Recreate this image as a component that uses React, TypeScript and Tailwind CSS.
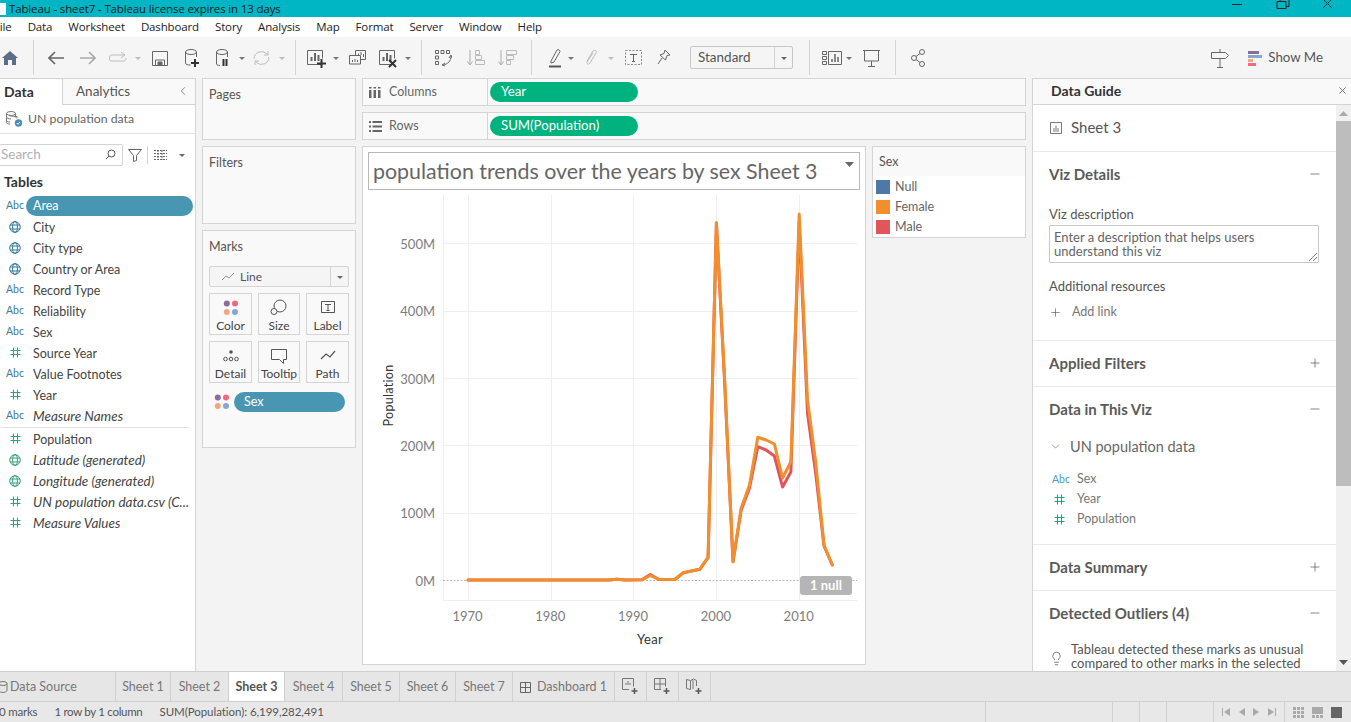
import React from "react";
import { Plus, Minus, ChevronDown, ChevronLeft, X, Lightbulb } from "lucide-react";

const Ico = ({ w, className, children }: { w: number; className?: string; children?: React.ReactNode }) => (
  <svg width={w} height={24} viewBox={`0 0 ${w} 24`} fill="none" stroke="#666" strokeWidth={1} className={`shrink-0 ${className ?? ""}`}>
    {children}
  </svg>
);

const Caret = ({ className, color = "#777" }: { className?: string; color?: string }) => (
  <svg width={6} height={24} viewBox="0 0 6 24" className={`shrink-0 ${className ?? ""}`}>
    <path d="M0 11h6l-3 3z" fill={color} />
  </svg>
);

const Sep = ({ className }: { className?: string }) => <div className={`h-[35px] w-px shrink-0 bg-[#d4d4d4] ${className ?? ""}`} />;

const Hash = ({ color = "#2aa583" }: { color?: string }) => (
  <svg width={11} height={11} viewBox="0 0 11 11" fill="none" stroke={color} strokeWidth={1} className="block">
    <path d="M3.5 0.5v10M7.5 0.5v10M0.5 3.5h10M0.5 7.500h10" />
  </svg>
);

const GlobeIcon = ({ color }: { color: string }) => (
  <svg width={12} height={12} viewBox="0 0 12 12" fill="none" stroke={color} strokeWidth={1} className="block">
    <circle cx="6" cy="6" r="5.300" />
    <ellipse cx="6" cy="6" rx="2.400" ry="5.300" />
    <path d="M1 4h10M1 8h10" />
  </svg>
);

const Abc = ({ color = "#3f7a9a" }: { color?: string }) => <span className="text-[10.5px] leading-none" style={{ color }}>Abc</span>;

type Kind = "abc" | "globe" | "hash" | "ggen" | "hgen";

const FieldIcon = ({ kind }: { kind: Kind }) => {
  if (kind === "abc") return <Abc />;
  if (kind === "globe") return <GlobeIcon color="#2f7899" />;
  if (kind === "ggen") return <GlobeIcon color="#35a27a" />;
  return <Hash />;
};

const Field = ({ kind, name, italic, pill }: { kind: Kind; name: string; italic?: boolean; pill?: boolean }) => (
  <div className="flex h-[21px] items-center">
    <div className="flex w-[29px] shrink-0 justify-center pl-px">
      <FieldIcon kind={kind} />
    </div>
    {pill ? (
      <div className="-ml-[3px] flex h-[20px] w-[167px] items-center rounded-full bg-[#4996b2] pl-[7px] pt-[1px] text-white">{name}</div>
    ) : (
      <div className={`ml-[4px] truncate whitespace-nowrap text-[#444] ${italic ? "pt-[1px] text-[13.5px] italic" : "pt-[3px]"}`}>{name}</div>
    )}
  </div>
);

const Card = ({ label, className }: { label: string; className: string }) => (
  <div className={`border border-[#d4d4d4] bg-[#f9f9f9] pl-[6px] pt-[7px] text-[#555] ${className}`}>{label}</div>
);

const MarkBtn = ({ label, children }: { label: string; children: React.ReactNode }) => (
  <div className="flex h-[42px] flex-col items-center border border-[#d4d4d4] bg-[#f9f9f9] pt-[4px] text-[12px] leading-none text-[#444]">
    <svg width={20} height={20} viewBox="0 0 20 20" fill="none" stroke="#555" strokeWidth={1}>{children}</svg>
    <span className="mt-[2px] whitespace-nowrap">{label}</span>
  </div>
);

const Dots = () => (
  <>
    <circle cx="5.8" cy="5.5" r="3" fill="#8a6d9b" stroke="none" />
    <circle cx="14" cy="5.5" r="3" fill="#f2697f" stroke="none" />
    <circle cx="5.8" cy="14" r="3" fill="#f2a77f" stroke="none" />
    <circle cx="14" cy="14" r="3" fill="#85a6d2" stroke="none" />
  </>
);

const Shelf = ({ label, pill, icon, className }: { label: string; pill: string; icon: React.ReactNode; className?: string }) => (
  <div className={`flex h-[28px] items-center border border-[#d4d4d4] bg-[#f9f9f9] ${className ?? ""}`}>
    <div className="flex h-full w-[125px] shrink-0 items-center border-r border-[#d4d4d4] pl-[6px] text-[#666]">
      <span className="w-[20px]">{icon}</span>
      <span>{label}</span>
    </div>
    <div className="ml-[2px] flex h-[20px] w-[148px] items-center rounded-full bg-[#00b27d] pb-[1px] pl-[11px] text-[13.2px] text-white">{pill}</div>
  </div>
);

const years = (y: number) => 467 + (y - 1970) * 8.28;
const orange: [number, number][] = [[1970, 580], [1987, 580], [1988, 579.3], [1989, 580], [1991, 579.8], [1992, 575.5], [1993, 579.2], [1995, 579.5], [1996, 572.7], [1998, 569.3], [1999, 557.3], [2000, 223], [2001, 380], [2002, 561.7], [2003, 508], [2004, 485], [2005, 437.3], [2006, 440], [2007, 444], [2008, 478], [2009, 461.7], [2010, 214], [2011, 400], [2012, 463], [2013, 545], [2014, 565]];
const red: [number, number][] = [[1970, 580], [1987, 580], [1988, 579.3], [1989, 580], [1991, 579.8], [1992, 574.5], [1993, 579.2], [1995, 579.5], [1996, 572.7], [1998, 569.3], [1999, 557.3], [2000, 223], [2001, 384], [2002, 561.7], [2003, 510], [2004, 488], [2005, 446.7], [2006, 450], [2007, 456], [2008, 487], [2009, 471.7], [2010, 222], [2011, 413], [2012, 474], [2013, 546], [2014, 565]];
const toPts = (d: [number, number][]) => d.map(([y, v]) => `${years(y).toFixed(1)},${v}`).join(" ");

const Chart = () => (
  <svg width={502} height={474} viewBox="362 190 502 474" className="block" style={{ fontFamily: "Lato, sans-serif" }}>
    <g stroke="#efefef" strokeWidth={1}>
      <path d="M442.5 195V601M442 600.5H856" />
      {[243.5, 311.5, 378.5, 445.5, 513.5].map((y) => <path key={y} d={`M442 ${y}H856`} />)}
      {[467.5, 550.5, 632.5, 715.5, 798.5].map((x) => <path key={x} d={`M${x} 195V601`} />)}
    </g>
    <path d="M442 580.5H856" stroke="#bbb" strokeWidth={1} strokeDasharray="2 1.5" />
    <g fontSize={13} fill="#7d7d7d" textAnchor="end">
      {[["500M", 249], ["400M", 316], ["300M", 384], ["200M", 451], ["100M", 518], ["0M", 586]].map(([t, y]) => (
        <text key={t} x={434} y={y as number}>{t}</text>
      ))}
    </g>
    <g fontSize={13} fill="#7d7d7d" textAnchor="middle">
      {[1970, 1980, 1990, 2000, 2010].map((y) => <text key={y} x={years(y) - 0.5} y={621}>{y}</text>)}
    </g>
    <text x={649} y={644} fontSize={13} fill="#333" textAnchor="middle" letterSpacing={0.3}>Year</text>
    <text transform="translate(392 395.5) rotate(-90)" fontSize={12.5} fill="#333" textAnchor="middle" letterSpacing={0.3}>Population</text>
    <polyline points={toPts(red)} fill="none" stroke="#e0535f" strokeWidth={3} strokeLinejoin="round" strokeLinecap="round" />
    <polyline points={toPts(orange)} fill="none" stroke="#f28e2b" strokeWidth={3} strokeLinejoin="round" strokeLinecap="round" />
    <rect x={799} y={576} width={52} height={19} rx={3} fill="#b5b5b5" />
    <text x={825} y={590} fontSize={13} fontWeight={700} fill="#fff" textAnchor="middle">1 null</text>
  </svg>
);

const Legend = ({ c, t }: { c: string; t: string }) => (
  <div className="flex h-[20px] items-center pl-[3px]">
    <div className="h-[14px] w-[14px]" style={{ background: c }} />
    <span className="ml-[5px] text-[#666]">{t}</span>
  </div>
);

const Head = ({ title, open }: { title: string; open?: boolean }) => (
  <div className="flex h-[45px] items-center justify-between pb-[1px] pl-[16px] pr-[14px] text-[15px] font-bold text-[#5a5a5a]">
    <span>{title}</span>
    {open ? <Minus size={14} color="#444" strokeWidth={1.1} /> : <Plus size={14} color="#444" strokeWidth={1.1} />}
  </div>
);

const Tab = ({ t, w, active }: { t: string; w: string; active?: boolean }) => (
  <div className={`flex h-full shrink-0 items-center justify-center border-r border-[#d0d0d0] pt-[1px] ${w} ${active ? "bg-white font-bold text-[#555]" : "text-[#777]"}`}>{t}</div>
);

const TabAdd = ({ children }: { children: React.ReactNode }) => (
  <div className="flex h-full w-[32px] shrink-0 items-center justify-center border-r border-[#d0d0d0]">
    <svg width={17} height={17} viewBox="0 0 17 17" fill="none" stroke="#777">
      {children}
      <path d="M12.5 10v6M9.5 13h6" stroke="#555" strokeWidth={1.5} />
    </svg>
  </div>
);

export default function App() {
  const ui = "Lato, sans-serif";
  return (
    <div className="flex h-[722px] w-[1351px] flex-col overflow-hidden bg-[#f3f3f3] text-[12.5px]" style={{ fontFamily: ui }}>
      {/* Title bar */}
      <div className="flex h-[17px] shrink-0 items-center bg-[#00b5c4] text-[11.5px] tracking-[-0.14px] text-[#1a1a1a]" style={{ fontFamily: "'Open Sans', sans-serif" }}>
        <div className="h-[12px] w-[6px] bg-white" />
        <span className="ml-[3px] whitespace-nowrap">Tableau - sheet7 - Tableau license expires in 13 days</span>
        <svg width={100} height={17} viewBox="0 0 100 17" className="ml-auto mr-[19px]" fill="none" stroke="#222">
          <path d="M0 4.5h10" />
          <path d="M45 1.5h9v7h-9zM48 1.5v-2h9v7h-3" />
          <path d="M91 -1l9 9M100 -1l-9 9" />
        </svg>
      </div>
      {/* Menu */}
      <div className="flex h-[20px] shrink-0 items-center gap-[16px] bg-white text-[11.5px] tracking-[-0.14px] text-[#222]" style={{ fontFamily: "'Open Sans', sans-serif" }}>
        <span className="-ml-[6px]">File</span>
        {["Data", "Worksheet", "Dashboard", "Story", "Analysis", "Map", "Format", "Server", "Window", "Help"].map((m) => <span key={m}>{m}</span>)}
      </div>
      {/* Toolbar */}
      <div className="flex h-[41px] shrink-0 items-center bg-[#f5f5f5]">
        <Ico w={18} className="ml-[1px]"><path d="M1 12 9 5l8 7h-2v7h-4v-5H7v5H3v-7z" fill="#5a6f85" stroke="none" /></Ico>
        <Sep className="ml-[14px]" />
        <Ico w={16} className="ml-[14px]" ><path d="M16 12H1M7 6l-6 6 6 6" strokeWidth={1.6} /></Ico>
        <Ico w={16} className="ml-[16px]"><path d="M0 12h15M9 6l6 6-6 6" stroke="#aaa" strokeWidth={1.6} /></Ico>
        <Ico w={19} className="ml-[12px]"><path d="M18 12c0 2-1 3-2 3H3c-2 0-2-6 0-6h13M13 6l4 3-4 3" stroke="#bbb" /></Ico>
        <Caret className="ml-[8px]" color="#bbb" />
        <Ico w={16} className="ml-[11px]"><path d="M.5 5.5h15v14H.5zM3.5 19v-5h9v5" /><path d="M6 16h4v3H6z" fill="#666" /></Ico>
        <Ico w={15} className="ml-[17px]"><ellipse cx="6" cy="6" rx="5.5" ry="2.5" /><path d="M.5 6v11c0 1.500 2 2 5 2M11.500 6v5" /><path d="M10 13v8M6 17h8" stroke="#333" strokeWidth={2} /></Ico>
        <Ico w={12} className="ml-[16px]"><ellipse cx="6" cy="6" rx="5.500" ry="2.500" /><path d="M.5 6v12c0 1 2 1.500 3.500 1.500M11.500 6v5" /><path d="M7.500 13v7M10.500 13v7" stroke="#333" strokeWidth={2} /></Ico>
        <Caret className="ml-[11px]" />
        <Ico w={17} className="ml-[8px]"><path d="M1 13a7.500 7.500 0 0 1 13-5M16 11a7.500 7.500 0 0 1-13 5" stroke="#bbb" /><path d="M11 9h4V5M6 15H2v4" stroke="#bbb" /></Ico>
        <Caret className="ml-[9px]" color="#bbb" />
        <Sep className="ml-[10px]" />
        <Ico w={19} className="ml-[11px]"><path d="M15.500 18.500H.5v-14h15v8" /><path d="M4.500 15v-4M8 15V7M11.500 15V9" strokeWidth={2} /><path d="M14.500 13v9M10 17.500h9" stroke="#333" strokeWidth={2} /></Ico>
        <Caret className="ml-[7px]" />
        <Ico w={17} className="ml-[10px]"><path d="M6.500 9V4.500h10v9H11.500M.5 9.500h11v8.500H.5z" /><path d="M3.500 16v-2M6 16v-3M8.500 16v-2M9.500 9V7.500M12 9V6M14.500 11V8" /></Ico>
        <Ico w={18} className="ml-[13px]"><path d="M15.500 18.500H.5v-14h15v8" /><path d="M4.500 15v-4M8 15V7M11.500 15V9" strokeWidth={2} /><path d="M10 14l7 7M17 14l-7 7" stroke="#333" strokeWidth={2} /></Ico>
        <Caret className="ml-[8px]" />
        <Sep className="ml-[10px]" />
        <Ico w={17} className="ml-[13px]"><path d="M.5 4.500h3v3h-3zM6 4.500h3v3H6zM11.500 4.500h3v3h-3zM.5 10h3v3h-3zM.5 15.500h3v3h-3z" /><path d="M16 10c0 5-3 8-8 9" /><path d="M14 12l2-3 1 3M10 17l-3 2 3 1" /></Ico>
        <Ico w={18} className="ml-[15px]"><path d="M3 4v14M.5 15.500 3 19l2.500-3.500" stroke="#aaa" /><path d="M8.500 4.500h4v4h-4zM8.500 9.500h6v4h-6zM8.500 14.500h9v4h-9z" stroke="#bbb" /></Ico>
        <Ico w={19} className="ml-[13px]"><path d="M3 4v14M.5 15.500 3 19l2.500-3.500" stroke="#aaa" /><path d="M8.500 4.500h10v4h-10zM8.500 9.500h7v4h-7zM8.500 14.500h4v4h-4z" stroke="#bbb" /></Ico>
        <Sep className="ml-[14px]" />
        <Ico w={13} className="ml-[16px]"><path d="M3 15 9 4c1-1 3 0 3 1.500L6 16l-3 1z" /><path d="M1 20.500h12" stroke="#555" strokeWidth={2} /></Ico>
        <Caret className="ml-[7px]" />
        <Ico w={12} className="ml-[11px]"><path d="M2 15 8 5c2-2 4 0 3 2l-6 10c-1 2-4 1-3-1l6-9" stroke="#bbb" /></Ico>
        <Caret className="ml-[11px]" color="#bbb" />
        <Ico w={17} className="ml-[11px]"><path d="M.5 4.500h16v14H.500z" strokeDasharray="2 1.500" stroke="#888" /><path d="M5 8.500h7M8.500 8.500v7M7 15.500h3" /></Ico>
        <Ico w={14} className="ml-[15px]"><path d="M8 4l5 5-3 .5-1.500 4.500-5.500-5 4-1.500zM5 12l-4 6" /></Ico>
        <div className="ml-[19px] flex h-[23px] w-[103px] shrink-0 items-center rounded-[2px] border border-[#c8c8c8] bg-[#f5f5f5] text-[13.500px] text-[#555]">
          <span className="flex-1 pl-[7px]">Standard</span>
          <div className="flex h-full w-[18px] items-center justify-center border-l border-[#d4d4d4]"><Caret color="#666" /></div>
        </div>
        <Sep className="ml-[16px]" />
        <Ico w={20} className="ml-[12px]"><path d="M.5 5.500h4v3h-4zM.5 10.500h4v3h-4zM.5 15.500h4v3h-4zM6.500 5.500h13v13h-13z" /><path d="M10 16v-3M13 16V8M16 16v-5" strokeWidth={1.500} /></Ico>
        <Caret className="ml-[4px]" />
        <Ico w={17} className="ml-[11px]"><path d="M0 4.500h17M1.500 5v10h14V5M8.500 15v5M5 20.500h7" /></Ico>
        <Sep className="ml-[15px]" />
        <Ico w={14} className="ml-[15px]"><circle cx="3" cy="12" r="2.500" /><circle cx="11" cy="6" r="2.500" /><circle cx="11" cy="18" r="2.500" /><path d="M5 10.500l4-3M5 13.500l4 3" /></Ico>
        <Ico w={18} className="ml-auto"><path d="M9 3v3M.5 6.500h14l3 3-3 3H.5zM9 13v8M6 21.500h6" /></Ico>
        <svg width={14} height={16} viewBox="0 0 14 16" className="ml-[19px] shrink-0">
          <rect x="0" y="1" width="11" height="3" fill="#836f96" />
          <rect x="0" y="5" width="14" height="3" fill="#85a6d2" />
          <rect x="0" y="9" width="5" height="3" fill="#f2a77f" />
          <rect x="0" y="13" width="8" height="3" fill="#f2697f" />
        </svg>
        <span className="ml-[6px] mr-[28px] text-[13.3px] text-[#555]">Show Me</span>
      </div>

      {/* Main */}
      <div className="flex h-[593px] shrink-0">
        {/* Data pane */}
        <div className="flex w-[196px] shrink-0 flex-col border-r border-[#d4d4d4] bg-white">
          <div className="flex h-[27px] shrink-0 border-t border-[#d4d4d4]">
            <div className="flex w-[63px] items-center border-r border-[#d4d4d4] pb-[2px] pl-[4px] text-[14px] font-bold text-[#333]">Data</div>
            <div className="flex flex-1 items-center justify-between border-b border-[#d4d4d4] bg-[#f9f9f9] pb-[1px] pl-[13px] pr-[5px] text-[13.5px] text-[#555]">
              <span>Analytics</span>
              <ChevronLeft size={14} color="#666" strokeWidth={1.3} />
            </div>
          </div>
          <div className="flex h-[29px] shrink-0 items-center border-b border-[#e2e2e2] pl-[5px] text-[12.3px] text-[#666]">
            <svg width={18} height={18} viewBox="0 0 18 18" fill="none" stroke="#777">
              <ellipse cx="6" cy="3.500" rx="4.500" ry="2" />
              <path d="M1.500 3.500v9c0 1 1.500 1.500 3.500 1.500M10.500 3.500v4M1.500 7c0 1 2 2 4.500 2M1.500 10.500c0 1 1.500 1.500 3.500 1.500M4 5.500c3 1 7 1 8 1v2" />
              <circle cx="13.500" cy="13" r="3.700" fill="#4a8fb5" stroke="none" />
              <path d="M11.800 13l1.200 1.300 2-2.300" stroke="#fff" />
            </svg>
            <span className="ml-[5px]">UN population data</span>
          </div>
          <div className="flex h-[37px] shrink-0 items-center pt-[4px]">
            <div className="flex h-[22px] w-[123px] items-center justify-between rounded-r-[2px] border border-l-0 border-[#d4d4d4] pl-[1px] pr-[5px] text-[13.5px] text-[#b0b0b0]">
              <span>Search</span>
              <svg width={13} height={13} viewBox="0 0 13 13" fill="none" stroke="#555"><circle cx="7.500" cy="5.500" r="3.500" /><path d="M5 8l-3 3" /></svg>
            </div>
            <svg width={14} height={14} viewBox="0 0 14 14" className="ml-[5px]" fill="none" stroke="#666"><path d="M.5 1.500h13L8.500 7.500v5l-3 1v-6z" /></svg>
            <div className="ml-[5px] h-[18px] w-px bg-[#d4d4d4]" />
            <svg width={13} height={10} viewBox="0 0 13 10" className="ml-[6px]" stroke="#666"><path d="M0 .5h13M0 3.500h13M0 6.500h13M0 9.500h13M4 0v10M8 0v10" strokeDasharray="2 1" /></svg>
            <Caret className="ml-[12px]" color="#666" />
          </div>
          <div className="flex h-[24px] shrink-0 items-center pb-[4px] pl-[4px] text-[14px] font-bold text-[#333]">Tables</div>
          <Field kind="abc" name="Area" pill />
          <Field kind="globe" name="City" />
          <Field kind="globe" name="City type" />
          <Field kind="globe" name="Country or Area" />
          <Field kind="abc" name="Record Type" />
          <Field kind="abc" name="Reliability" />
          <Field kind="abc" name="Sex" />
          <Field kind="hash" name="Source Year" />
          <Field kind="abc" name="Value Footnotes" />
          <Field kind="hash" name="Year" />
          <Field kind="abc" name="Measure Names" italic />
          <div className="ml-px mt-px h-px w-[188px] shrink-0 bg-[#e2e2e2]" />
          <Field kind="hash" name="Population" />
          <Field kind="ggen" name="Latitude (generated)" italic />
          <Field kind="ggen" name="Longitude (generated)" italic />
          <Field kind="hash" name="UN population data.csv (C..." italic />
          <Field kind="hash" name="Measure Values" italic />
        </div>

        {/* Cards column */}
        <div className="ml-[6px] flex w-[154px] shrink-0 flex-col gap-[6px]">
          <Card label="Pages" className="h-[62px]" />
          <Card label="Filters" className="h-[78px]" />
          <div className="flex h-[218px] flex-col border border-[#d4d4d4] bg-[#f9f9f9] px-[6px] pt-[7px] text-[#555]">
            <div className="h-[28px]">Marks</div>
            <div className="flex h-[21px] items-center rounded-[2px] border border-[#d4d4d4] bg-[#f5f5f5] text-[12px]">
              <svg width={12} height={8} viewBox="0 0 12 8" className="ml-[12px]" fill="none" stroke="#999"><path d="M0 7l4-4 3 2 5-5" /></svg>
              <span className="ml-[6px] flex-1">Line</span>
              <div className="flex h-full w-[18px] items-center justify-center border-l border-[#d4d4d4]"><Caret color="#666" /></div>
            </div>
            <div className="mt-[6px] grid grid-cols-[43px_42px_43px] gap-[6px]">
              <MarkBtn label="Color"><Dots /></MarkBtn>
              <MarkBtn label="Size"><circle cx="11" cy="8" r="6" /><circle cx="5" cy="13.500" r="3" fill="#f9f9f9" /></MarkBtn>
              <MarkBtn label="Label"><path d="M3.500 3.500h13v11h-13z" /><path d="M7 6.500h6M10 6.500v6M8.500 12.500h3" /></MarkBtn>
              <MarkBtn label="Detail"><circle cx="10" cy="6" r="1.800" fill="#555" stroke="none" /><circle cx="4.500" cy="13" r="1.800" /><circle cx="10" cy="13" r="1.800" /><circle cx="15.500" cy="13" r="1.800" /></MarkBtn>
              <MarkBtn label="Tooltip"><path d="M2.500 3.500h15v10h-3v4l-4-4h-8z" /></MarkBtn>
              <MarkBtn label="Path"><path d="M3 13l5-5 4 3 5-6" strokeWidth={1.200} /></MarkBtn>
            </div>
            <div className="mt-[9px] flex h-[20px] items-center">
              <svg width={20} height={20} viewBox="0 0 20 20" className="ml-[3px]" fill="none"><Dots /></svg>
              <div className="ml-[2px] flex h-[20px] w-[111px] items-center rounded-full bg-[#4996b2] pl-[10px] pt-[1px] text-white">Sex</div>
            </div>
          </div>
        </div>

        {/* Centre */}
        <div className="ml-[6px] flex w-[664px] shrink-0 flex-col">
          <Shelf label="Columns" pill="Year" icon={<svg width={12} height={11} viewBox="0 0 12 11" fill="#666"><path d="M0 3h2.500v8H0zM4.500 3H7v8H4.500zM9 3h2.500v8H9zM0 0h2.500v1.500H0zM4.500 0H7v1.500H4.500zM9 0h2.500v1.500H9z" /></svg>} />
          <Shelf label="Rows" pill="SUM(Population)" className="mt-[6px]" icon={<svg width={13} height={11} viewBox="0 0 13 11" fill="#666"><path d="M0 0h2v2H0zM3.500 0H13v2H3.500zM0 4.500h2v2H0zM3.500 4.500H13v2H3.500zM0 9h2v2H0zM3.500 9H13v2H3.500z" /></svg>} />
          <div className="mt-[6px] flex h-[519px] gap-[6px]">
            <div className="h-full w-[504px] shrink-0 border border-[#d4d4d4] bg-white pt-[5px]">
              <div className="mx-[5px] flex h-[38px] items-center justify-between border border-[#b8b8b8] pl-[4px] pr-[5px] text-[21.4px] text-[#666]">
                <span className="whitespace-nowrap">population trends over the years by sex Sheet 3</span>
                <svg width={9} height={5} viewBox="0 0 9 5" className="-mt-[14px]"><path d="M0 0h9L4.500 5z" fill="#666" /></svg>
              </div>
              <Chart />
            </div>
            <div className="h-[92px] w-[154px] shrink-0 border border-[#d4d4d4] bg-white">
              <div className="flex h-[29px] items-center bg-[#f9f9f9] pl-[6px] pt-[1px] text-[#555]">Sex</div>
              <div className="pt-px"><Legend c="#4e79a7" t="Null" /><Legend c="#f28e2b" t="Female" /><Legend c="#e15759" t="Male" /></div>
            </div>
          </div>
        </div>

        {/* Data guide */}
        <div className="ml-[6px] flex w-[319px] shrink-0 flex-col border-l border-t border-[#d4d4d4] bg-white">
          <div className="flex h-[26px] shrink-0 items-center justify-between border-b border-[#d4d4d4] bg-[#f9f9f9] pb-[2px] pl-[18px] pr-[3px] text-[14px] font-bold text-[#333]">
            <span>Data Guide</span>
            <X size={11} color="#666" />
          </div>
          <div className="flex min-h-0 flex-1">
            <div className="w-[303px] shrink-0 overflow-hidden text-[#666]">
              <div className="flex h-[47px] items-center border-b border-[#eaeaea] pb-[1px] pl-[17px] text-[15px] text-[#555]">
                <svg width={12} height={12} viewBox="0 0 12 12" fill="none" stroke="#777"><path d="M.5.5h11v11H.5z" /><path d="M3 10V6h2V3.500h2V6h2v4z" fill="#bbb" stroke="none" /></svg>
                <span className="ml-[9px]">Sheet 3</span>
              </div>
              <Head title="Viz Details" open />
              <div className="h-[144px] border-b border-[#eaeaea] pl-[16px] pt-[8px] text-[13px]">
                <div className="text-[#555]">Viz description</div>
                <div className="relative h-[38px] w-[270px] rounded-[1px] border border-[#c8c8c8] px-[4px] pt-[4px] leading-[14px] text-[#666]">
                  <div className="w-[210px]">Enter a description that helps users understand this viz</div>
                  <svg width={9} height={9} viewBox="0 0 9 9" className="absolute bottom-[1px] right-[1px]" stroke="#777"><path d="M1 9l8-8M5 9l4-4" /></svg>
                </div>
                <div className="mt-[14px] text-[#555]">Additional resources</div>
                <div className="mt-[7px] flex items-center">
                  <Plus size={13} color="#444" strokeWidth={1.1} />
                  <span className="ml-[10px] text-[12.5px] text-[#777]">Add link</span>
                </div>
              </div>
              <div className="border-b border-[#eaeaea]"><Head title="Applied Filters" /></div>
              <Head title="Data in This Viz" open />
              <div className="h-[113px] border-b border-[#eaeaea] pl-[16px] pt-[4px]">
                <div className="flex items-center text-[14.500px] text-[#666]">
                  <ChevronDown size={13} color="#666" strokeWidth={1.2} />
                  <span className="ml-[8px]">UN population data</span>
                </div>
                <div className="mt-[12px] flex h-[20px] items-center"><span className="w-[28px] pl-[3px]"><Abc color="#4d9bb5" /></span><span className="text-[#777]">Sex</span></div>
                <div className="flex h-[20px] items-center"><span className="w-[28px] pl-[5px]"><Hash color="#00b27d" /></span><span className="text-[#777]">Year</span></div>
                <div className="flex h-[20px] items-center"><span className="w-[28px] pl-[5px]"><Hash color="#00b27d" /></span><span className="text-[#777]">Population</span></div>
              </div>
              <div className="border-b border-[#eaeaea]"><Head title="Data Summary" /></div>
              <Head title="Detected Outliers (4)" open />
              <div className="flex pl-[16px] pt-[6px] text-[13px] leading-[14px] text-[#555]">
                <Lightbulb size={15} color="#555" strokeWidth={1.200} className="mt-[9px] shrink-0" />
                <div className="ml-[7px] w-[250px]">Tableau detected these marks as unusual compared to other marks in the selected</div>
              </div>
            </div>
            <div className="flex w-[15px] shrink-0 flex-col items-center bg-[#f0f0f0]">
              <svg width={9} height={5} viewBox="0 0 9 5" className="mt-[6px]"><path d="M0 5h9L4.500 0z" fill="#aaa" /></svg>
              <div className="mt-[5px] h-[365px] w-full bg-[#bdbdbd]" />
              <svg width={9} height={5} viewBox="0 0 9 5" className="mt-auto mb-[6px]"><path d="M0 0h9L4.500 5z" fill="#555" /></svg>
            </div>
          </div>
        </div>
      </div>

      {/* Sheet tabs */}
      <div className="flex h-[30px] shrink-0 items-center border-t border-[#cfcfcf] bg-[#e6e6e6] text-[12.5px]">
        <div className="flex h-full w-[116px] shrink-0 items-center border-r border-[#d0d0d0] pt-[1px] text-[#777]">
          <svg width={9} height={12} viewBox="5 0 9 12" fill="none" stroke="#777"><ellipse cx="8" cy="2.500" rx="4" ry="2" /><path d="M4 2.500v7c0 1 2 2 4 2s4-1 4-2v-7" /></svg>
          <span className="ml-[1px]">Data Source</span>
        </div>
        <Tab t="Sheet 1" w="w-[55px]" />
        <Tab t="Sheet 2" w="w-[58px]" />
        <Tab t="Sheet 3" w="w-[56px]" active />
        <Tab t="Sheet 4" w="w-[58px]" />
        <Tab t="Sheet 5" w="w-[57px]" />
        <Tab t="Sheet 6" w="w-[56px]" />
        <Tab t="Sheet 7" w="w-[57px]" />
        <div className="flex h-full w-[102px] shrink-0 items-center justify-center gap-[6px] border-r border-[#d0d0d0] pt-[1px] text-[#777]">
          <svg width={11} height={11} viewBox="0 0 11 11" fill="none" stroke="#666"><path d="M.5.5h10v10H.5zM5.500.5v10M.5 5.500h10" /></svg>
          Dashboard 1
        </div>
        <TabAdd><path d="M.5.5h11v8M7 11.500H.5V.5M4 7V5M6 7V3M8 7V5" /></TabAdd>
        <TabAdd><path d="M.5.5h11v8M7 11.500H.5V.5M6 .5v11M.5 6h11" /></TabAdd>
        <TabAdd><path d="M.5 1.500l4 1 3-1.500 3 1.500V8M7 11V2M4.500 2.500v9M.5 1.500v9l4 1" /></TabAdd>
      </div>
      {/* Status bar */}
      <div className="flex h-[21px] shrink-0 items-center border-t border-[#d0d0d0] bg-[#e8e8e8] text-[11.5px] text-[#555]">
        <span className="-ml-[1px] tracking-[-0.2px]">0 marks</span>
        <span className="ml-[17px] tracking-[-0.3px]">1 row by 1 column</span>
        <span className="ml-[17px] tracking-[-0.05px]">SUM(Population): 6,199,282,491</span>
        <div className="ml-auto flex h-full">
          <div className="w-[127px] border-l border-[#d0d0d0]" />
          <div className="w-[27px] border-l border-[#d0d0d0]" />
          <div className="w-[27px] border-l border-[#d0d0d0]" />
          <div className="w-[47px] border-l border-[#d0d0d0]" />
          <div className="flex w-[71px] items-center justify-around border-l border-[#d0d0d0] px-[4px]">
            <svg width={8} height={8} viewBox="0 0 8 8" fill="#aaa"><path d="M0 0h1v8H0zM8 0v8L2 4z" /></svg>
            <svg width={6} height={8} viewBox="0 0 6 8" fill="#aaa"><path d="M6 0v8L0 4z" /></svg>
            <svg width={6} height={8} viewBox="0 0 6 8" fill="#aaa"><path d="M0 0v8l6-4z" /></svg>
            <svg width={8} height={8} viewBox="0 0 8 8" fill="#aaa"><path d="M7 0h1v8H7zM0 0v8l6-4z" /></svg>
          </div>
          <div className="flex w-[67px] items-center gap-[8px] border-l border-[#d0d0d0] pl-[8px]">
            <svg width={11} height={11} viewBox="0 0 11 11" fill="#aaa"><path d="M0 0h3v3H0zM4 0h3v3H4zM8 0h3v3H8zM0 4h3v3H0zM4 4h3v3H4zM8 4h3v3H8zM0 8h3v3H0zM4 8h3v3H4zM8 8h3v3H8z" /></svg>
            <svg width={11} height={11} viewBox="0 0 11 11" fill="#aaa"><path d="M0 0h11v7H0zM0 8h3v3H0zM4 8h3v3H4zM8 8h3v3H8z" /></svg>
            <div className="h-[11px] w-[11px] bg-[#666]" />
          </div>
        </div>
      </div>
    </div>
  );
}
